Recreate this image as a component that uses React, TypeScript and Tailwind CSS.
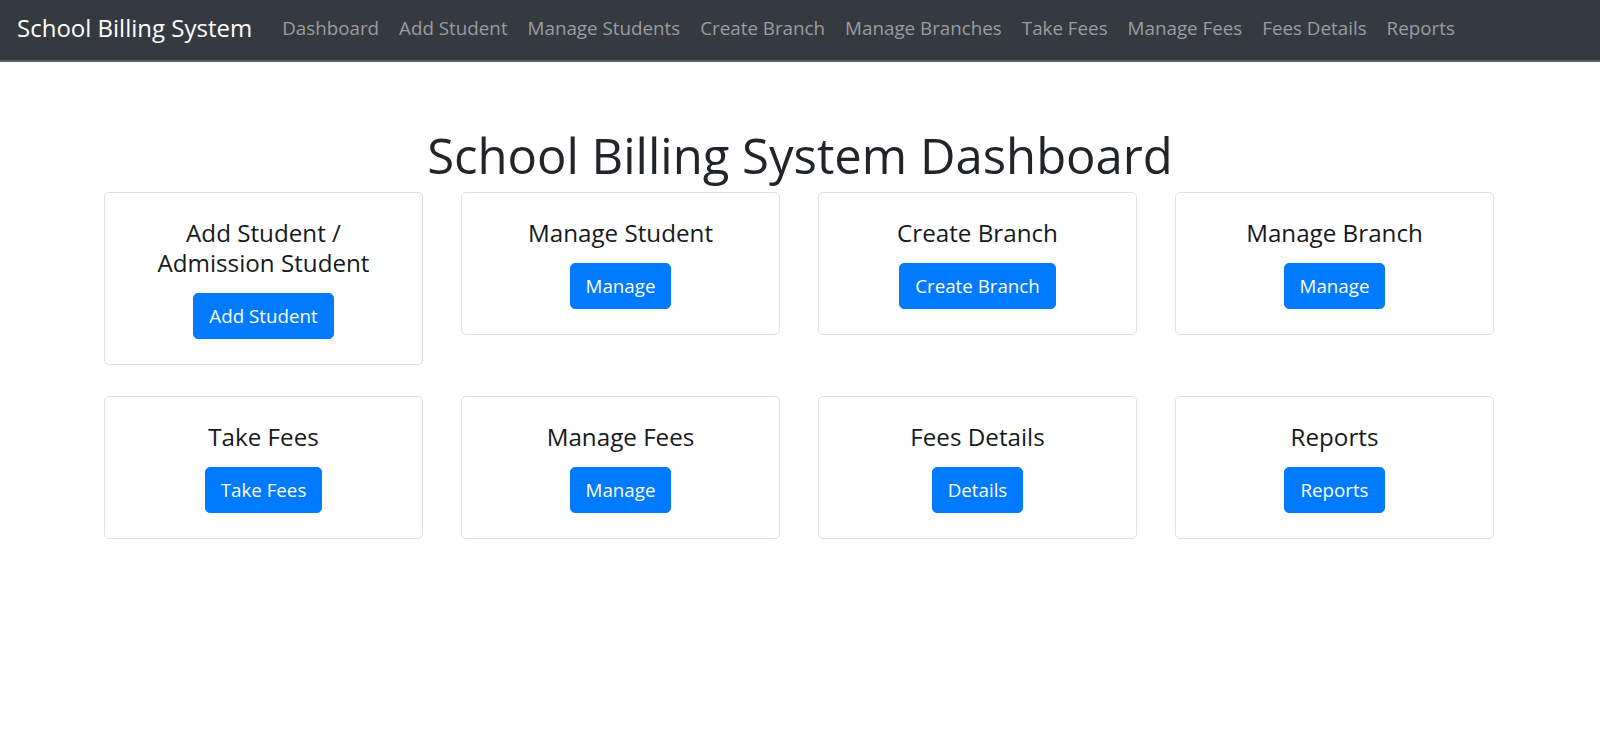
import React from 'react'

const NAV_LINKS = [
  'Dashboard',
  'Add Student',
  'Manage Students',
  'Create Branch',
  'Manage Branches',
  'Take Fees',
  'Manage Fees',
  'Fees Details',
  'Reports',
]

type CardItem = { title: React.ReactNode; button: string }

const CARDS: CardItem[] = [
  {
    title: (
      <>
        Add Student /<br />
        Admission Student
      </>
    ),
    button: 'Add Student',
  },
  { title: 'Manage Student', button: 'Manage' },
  { title: 'Create Branch', button: 'Create Branch' },
  { title: 'Manage Branch', button: 'Manage' },
  { title: 'Take Fees', button: 'Take Fees' },
  { title: 'Manage Fees', button: 'Manage' },
  { title: 'Fees Details', button: 'Details' },
  { title: 'Reports', button: 'Reports' },
]

function Navbar() {
  return (
    <nav className="h-[62px] bg-[#343a40] border-b-2 border-[#5d6267] flex items-center pl-[17px] pb-[4px]">
      <a className="text-white text-[24px] leading-[30px] mr-[30px] whitespace-nowrap">
        School Billing System
      </a>
      <ul className="flex items-center gap-[20px]">
        {NAV_LINKS.map(link => (
          <li key={link} className="text-[#9a9da0] text-[18.8px] leading-[28px] whitespace-nowrap">
            {link}
          </li>
        ))}
      </ul>
    </nav>
  )
}

function DashCard({ item }: { item: CardItem }) {
  return (
    <div className="bg-white border border-[#dfdfdf] rounded-[5px] p-[25px] text-center">
      <h5 className="text-[#16191c] text-[24.2px] leading-[30px] mb-[15px]">{item.title}</h5>
      <button className="h-[46px] px-[15px] rounded-[5px] bg-[#007bff] border border-[#007bff] text-white text-[18.75px] leading-[28px]">
        {item.button}
      </button>
    </div>
  )
}

export default function App() {
  return (
    <div
      className="min-h-screen bg-white antialiased"
      style={{ fontFamily: '"Open Sans", "Noto Sans", sans-serif' }}
    >
      <Navbar />
      <main className="pt-[63px]">
        <h1 className="text-center text-[#212529] text-[49px] leading-[60px] mb-[7px]">
          School Billing System Dashboard
        </h1>
        <div className="w-[1390px] ml-[104px] grid grid-cols-4 gap-x-[38px] gap-y-[31px] items-start">
          {CARDS.map((item, i) => (
            <DashCard key={i} item={item} />
          ))}
        </div>
      </main>
    </div>
  )
}
